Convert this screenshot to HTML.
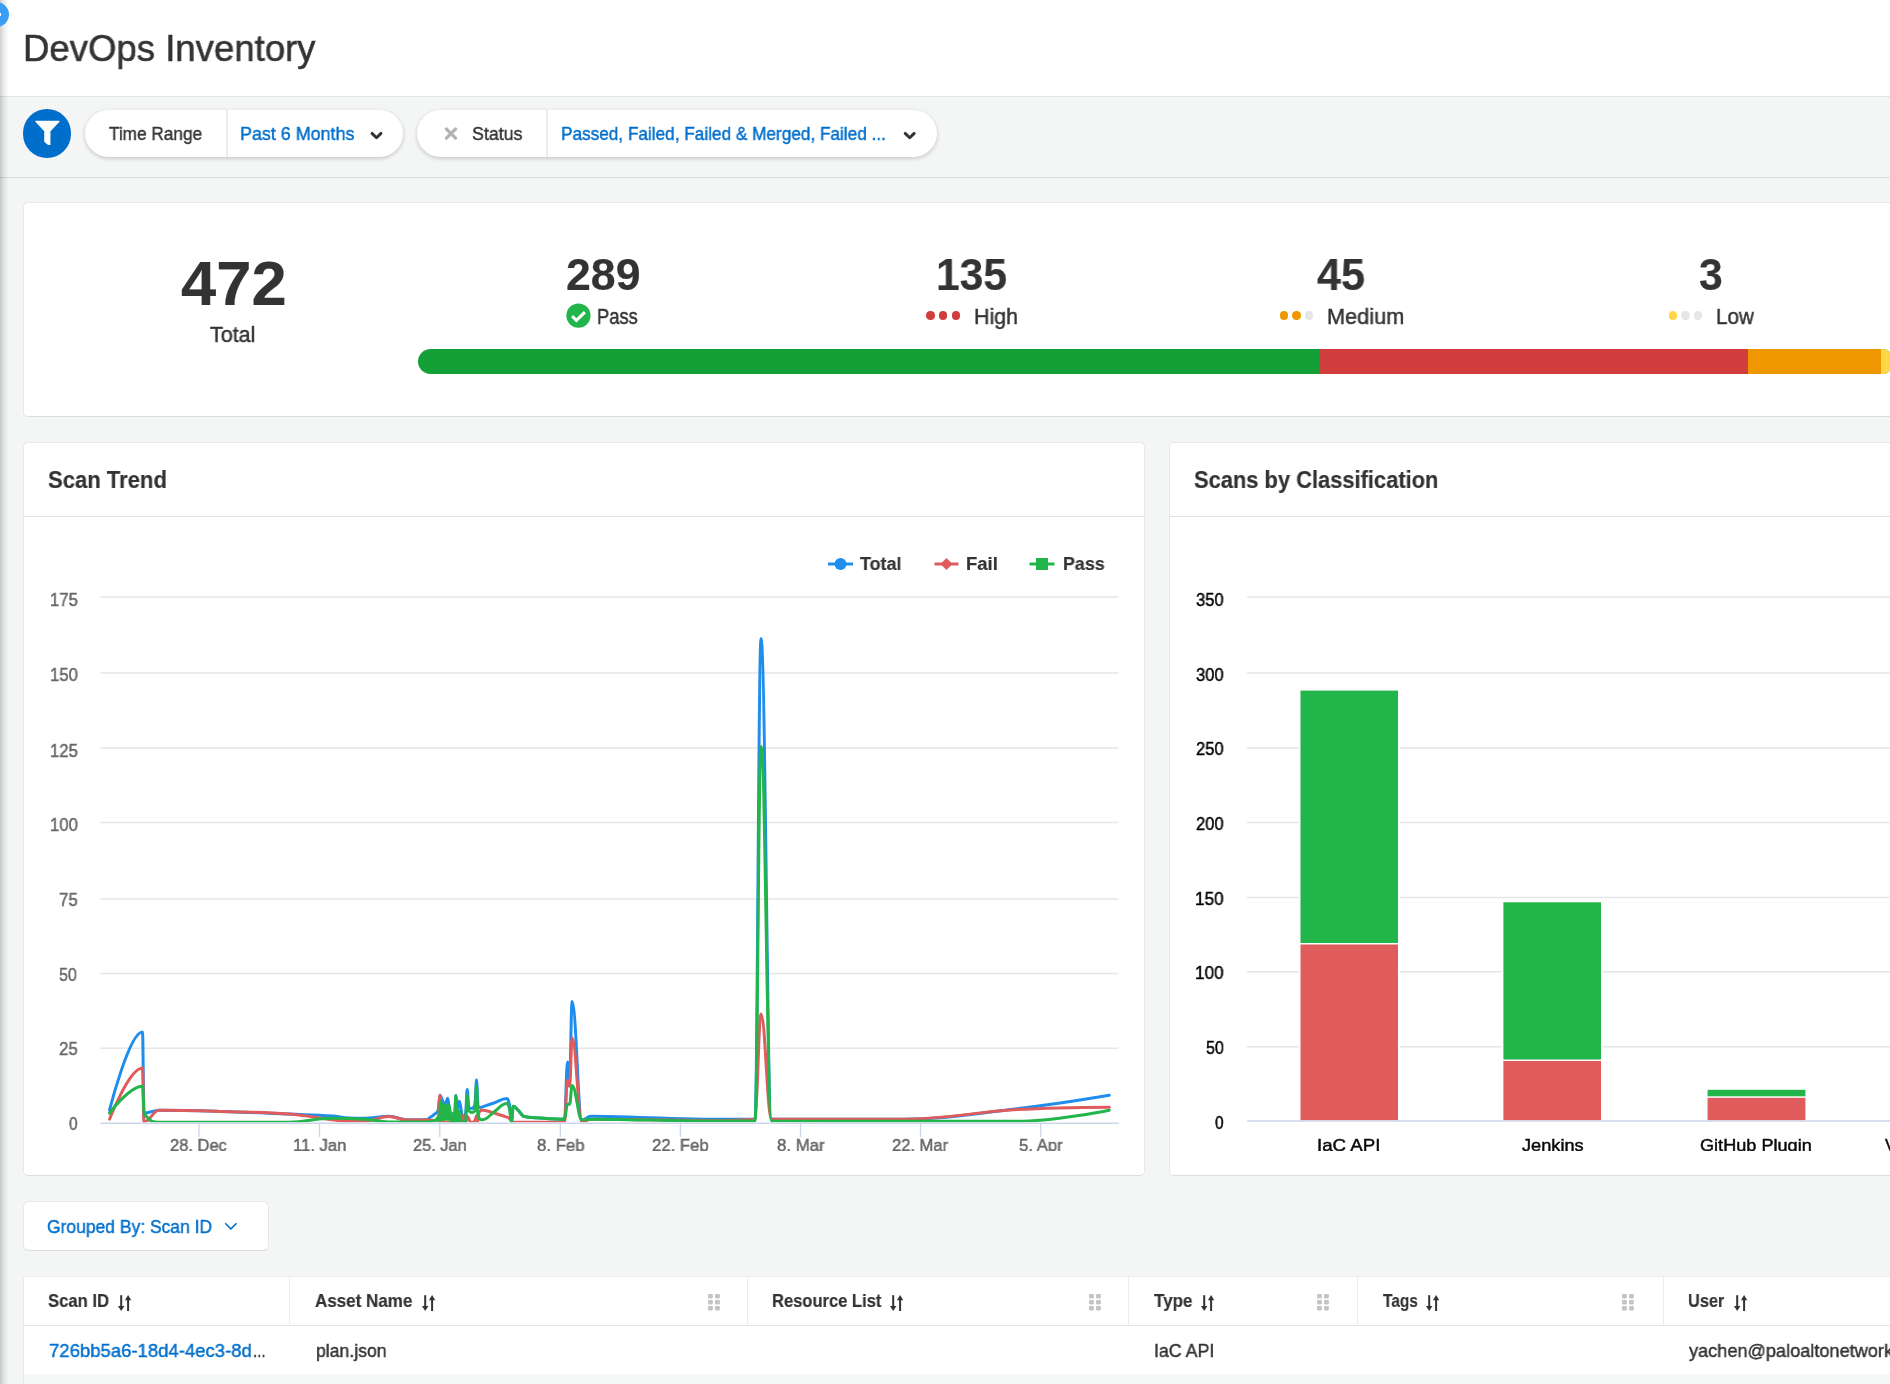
<!DOCTYPE html>
<html lang="en"><head><meta charset="utf-8"><title>DevOps Inventory</title>
<style>
html,body{margin:0;padding:0;width:1890px;height:1384px;overflow:hidden}
#app{position:absolute;left:0;top:0;width:1890px;height:1384px;overflow:hidden;background:#f4f5f5}
body{width:1890px;height:1384px;overflow:hidden;position:relative;background:#f4f5f5;font-family:"Liberation Sans",sans-serif;color:#333}
.abs{position:absolute}
.t{position:absolute;white-space:nowrap;line-height:1;transform-origin:0 0;-webkit-text-stroke:0.45px;will-change:transform}
.card{position:absolute;background:#fff;border:1px solid #e7e8e8;border-bottom-color:#dcdddd;border-radius:5px;box-sizing:border-box}
.pill{position:absolute;top:110px;height:47px;border-radius:24px;background:#fff;box-shadow:0 1.5px 4px rgba(0,0,0,.2)}
.vline{position:absolute;width:1px;background:#e4e5e5}
.pdiv{position:absolute;top:110px;height:47px;width:1.6px;background:#ececec}
.hline{position:absolute;height:1px;background:#e7e8e8}
</style></head><body>
<div id="app">

<div class="abs" style="left:0;top:0;width:1890px;height:96px;background:#fff"></div>
<div class="hline" style="left:0;top:95.5px;height:1.7px;width:1890px;background:#e3e4e4"></div>
<div class="hline" style="left:0;top:177px;width:1890px;background:#dcdddd"></div>
<span class="t" style="left:23.01px;top:30.80px;font-size:36.8px;color:#333;transform:scaleX(0.9932);-webkit-text-stroke:0.55px;">DevOps Inventory</span>
<div class="abs" style="left:22.6px;top:108.9px;width:48.9px;height:48.9px;border-radius:50%;background:#006fcc"></div>
<svg class="abs" style="left:23px;top:109px" width="49" height="49" viewBox="23 109 49 49"><path d="M35.9 121.3H59L49.8 131.1V144.4H48.5L44.9 141.5V131.1Z" fill="#fff" stroke="#fff" stroke-width="1.3" stroke-linejoin="round"/></svg>
<div class="pill" style="left:85px;width:318px"></div>
<div class="pdiv" style="left:226.3px"></div>
<span class="t" style="left:109.00px;top:124.30px;font-size:19px;color:#333;transform:scaleX(0.9058);">Time Range</span>
<span class="t" style="left:240.36px;top:124.30px;font-size:19px;color:#006fcc;transform:scaleX(0.9417);">Past 6 Months</span>
<svg class="abs" style="left:366px;top:127px" width="20" height="16" viewBox="366 127 20 16"><path d="M372 133.4l4.5 4.4l4.5 -4.4" fill="none" stroke="#333" stroke-width="2.9" stroke-linecap="round" stroke-linejoin="round"/></svg>
<div class="pill" style="left:417.3px;width:520px"></div>
<div class="pdiv" style="left:546.3px"></div>
<svg class="abs" style="left:440px;top:124px" width="22" height="20" viewBox="440 124 22 20"><path d="M446.4 129l9.2 9.2M455.6 129l-9.2 9.2" fill="none" stroke="#b3b3b3" stroke-width="3.2" stroke-linecap="round"/></svg>
<span class="t" style="left:471.86px;top:124.30px;font-size:19px;color:#333;transform:scaleX(0.9377);">Status</span>
<span class="t" style="left:560.60px;top:124.30px;font-size:19px;color:#006fcc;transform:scaleX(0.9048);">Passed, Failed, Failed &amp; Merged, Failed ...</span>
<svg class="abs" style="left:900px;top:127px" width="20" height="16" viewBox="900 127 20 16"><path d="M905.2 133.4l4.5 4.4l4.5 -4.4" fill="none" stroke="#333" stroke-width="2.9" stroke-linecap="round" stroke-linejoin="round"/></svg>
<div class="card" style="left:23px;top:202px;width:1900px;height:214.5px"></div>
<span class="t" style="left:180.50px;top:252.00px;font-size:63px;color:#333;font-weight:700;-webkit-text-stroke:0.2px;transform:scaleX(1.0049);">472</span>
<span class="t" style="left:210.00px;top:324.00px;font-size:22px;color:#333;transform:scaleX(0.9783);">Total</span>
<span class="t" style="left:565.80px;top:253.30px;font-size:44.5px;color:#333;font-weight:700;-webkit-text-stroke:0.2px;transform:scaleX(1.0028);">289</span>
<svg class="abs" style="left:565px;top:303px" width="26" height="26" viewBox="565 303 26 26"><circle cx="578.45" cy="315.65" r="12.1" fill="#21b54a"/><path d="M572.1 316.1L576.4 320.4L584.9 312.2" fill="none" stroke="#fff" stroke-width="3"/></svg>
<span class="t" style="left:597.47px;top:306.00px;font-size:22px;color:#333;transform:scaleX(0.8313);">Pass</span>
<span class="t" style="left:936.29px;top:253.30px;font-size:44.5px;color:#333;font-weight:700;-webkit-text-stroke:0.2px;transform:scaleX(0.9556);">135</span>
<div class="abs" style="left:926.4px;top:311.2px;width:8.4px;height:8.4px;border-radius:50%;background:#d13c3c"></div>
<div class="abs" style="left:939.0px;top:311.2px;width:8.4px;height:8.4px;border-radius:50%;background:#d13c3c"></div>
<div class="abs" style="left:951.7px;top:311.2px;width:8.4px;height:8.4px;border-radius:50%;background:#d13c3c"></div>
<span class="t" style="left:974.23px;top:306.00px;font-size:22px;color:#333;transform:scaleX(0.9727);">High</span>
<span class="t" style="left:1317.00px;top:253.30px;font-size:44.5px;color:#333;font-weight:700;-webkit-text-stroke:0.2px;transform:scaleX(0.9694);">45</span>
<div class="abs" style="left:1279.5px;top:311.2px;width:8.4px;height:8.4px;border-radius:50%;background:#ef9700"></div>
<div class="abs" style="left:1292.2px;top:311.2px;width:8.4px;height:8.4px;border-radius:50%;background:#ef9700"></div>
<div class="abs" style="left:1304.8px;top:311.2px;width:8.4px;height:8.4px;border-radius:50%;background:#e6e6e6"></div>
<span class="t" style="left:1327.01px;top:306.00px;font-size:22px;color:#333;transform:scaleX(0.9870);">Medium</span>
<span class="t" style="left:1699.04px;top:253.30px;font-size:44.5px;color:#333;font-weight:700;-webkit-text-stroke:0.2px;transform:scaleX(0.9565);">3</span>
<div class="abs" style="left:1668.8px;top:311.2px;width:8.4px;height:8.4px;border-radius:50%;background:#ffd745"></div>
<div class="abs" style="left:1681.4px;top:311.2px;width:8.4px;height:8.4px;border-radius:50%;background:#e6e6e6"></div>
<div class="abs" style="left:1694.0px;top:311.2px;width:8.4px;height:8.4px;border-radius:50%;background:#e6e6e6"></div>
<span class="t" style="left:1716.06px;top:306.00px;font-size:22px;color:#333;transform:scaleX(0.9375);">Low</span>
<div class="abs" style="left:418px;top:349px;width:1476px;height:25px;border-radius:12.5px;overflow:hidden;background:#12a037"><div class="abs" style="left:901px;top:0;width:429px;height:25px;background:#d13c3c"></div><div class="abs" style="left:1330px;top:0;width:133px;height:25px;background:#ef9700"></div><div class="abs" style="left:1463px;top:0;width:40px;height:25px;background:#ffd745"></div></div>
<div class="card" style="left:23px;top:442px;width:1122px;height:733.5px"></div>
<div class="hline" style="left:24px;top:516px;width:1120px;background:#e1e2e2"></div>
<span class="t" style="left:48.40px;top:468.00px;font-size:24.3px;color:#333;font-weight:700;-webkit-text-stroke:0.2px;transform:scaleX(0.9077);">Scan Trend</span>
<div class="card" style="left:1169px;top:442px;width:760px;height:733.5px"></div>
<div class="hline" style="left:1170px;top:516px;width:760px;background:#e1e2e2"></div>
<span class="t" style="left:1194.40px;top:468.00px;font-size:24.3px;color:#333;font-weight:700;-webkit-text-stroke:0.2px;transform:scaleX(0.9004);">Scans by Classification</span>
<div class="abs" style="left:0;top:0;width:1890px;height:1151px;overflow:hidden">
<svg class="abs" style="left:0;top:0" width="1890" height="1384" viewBox="0 0 1890 1384"><defs><clipPath id="lc"><rect x="100" y="590" width="1019" height="532.3"/></clipPath></defs>
<path d="M100.5 596.9H1118.5" stroke="#e6e6e6" stroke-width="1.5"/>
<path d="M100.5 672.9H1118.5" stroke="#e6e6e6" stroke-width="1.5"/>
<path d="M100.5 747.9H1118.5" stroke="#e6e6e6" stroke-width="1.5"/>
<path d="M100.5 822.6H1118.5" stroke="#e6e6e6" stroke-width="1.5"/>
<path d="M100.5 898.9H1118.5" stroke="#e6e6e6" stroke-width="1.5"/>
<path d="M100.5 973.5H1118.5" stroke="#e6e6e6" stroke-width="1.5"/>
<path d="M100.5 1048.3H1118.5" stroke="#e6e6e6" stroke-width="1.5"/>
<g clip-path="url(#lc)" fill="none" stroke-width="3" stroke-linejoin="round" stroke-linecap="round">
<path d="M109.50 1110.18C109.50 1110.18 129.30 1032.05 142.50 1032.05C143.10 1032.05 143.40 1113.18 144.00 1113.18C150.00 1113.18 153.00 1110.18 159.00 1110.18C187.40 1110.18 201.60 1110.83 230.00 1111.68C253.60 1112.39 265.40 1113.11 289.00 1114.09C306.20 1114.80 314.80 1114.77 332.00 1115.89C338.80 1116.33 342.20 1117.69 349.00 1117.99C355.40 1118.29 358.60 1118.29 365.00 1118.29C374.60 1118.29 379.40 1116.19 389.00 1116.19C396.20 1116.19 399.80 1119.80 407.00 1119.80C415.00 1119.80 419.00 1119.80 427.00 1119.80C428.20 1119.80 428.80 1118.44 430.00 1117.54C431.60 1116.34 432.40 1116.04 434.00 1114.54C435.72 1112.92 436.58 1114.54 438.30 1109.73C438.98 1104.92 439.32 1095.31 440.00 1095.31C441.16 1095.31 441.74 1099.74 442.90 1101.62C443.90 1103.23 444.40 1104.02 445.40 1104.02C446.32 1104.02 446.78 1098.31 447.70 1098.31C448.54 1098.31 448.96 1109.13 449.80 1111.53C450.68 1113.94 451.12 1113.34 452.00 1113.94C453.04 1114.54 453.56 1114.54 454.60 1114.54C455.12 1114.54 455.38 1095.61 455.90 1095.61C456.50 1095.61 456.80 1108.53 457.40 1108.53C458.16 1108.53 458.54 1101.32 459.30 1101.32C460.22 1101.32 460.68 1108.41 461.60 1112.73C462.24 1115.74 462.56 1119.65 463.20 1119.65C463.76 1119.65 464.04 1118.49 464.60 1116.94C465.04 1115.72 465.26 1116.94 465.70 1112.73C466.30 1108.53 466.60 1089.60 467.20 1089.60C467.84 1089.60 468.16 1105.52 468.80 1106.72C469.20 1107.93 469.40 1107.70 469.80 1107.93C470.68 1108.42 471.12 1108.53 472.00 1108.53C472.76 1108.53 473.14 1108.20 473.90 1106.72C474.38 1105.79 474.62 1106.72 475.10 1102.52C475.66 1098.31 475.94 1079.98 476.50 1079.98C477.10 1079.98 477.40 1103.42 478.00 1105.52C478.80 1107.63 479.20 1107.63 480.00 1107.63C480.56 1107.63 480.84 1107.36 481.40 1107.17C486.44 1105.50 488.96 1104.70 494.00 1102.97C499.12 1101.21 501.68 1098.46 506.80 1098.46C507.88 1098.46 508.42 1099.93 509.50 1105.07C510.34 1109.07 510.76 1121.30 511.60 1121.30C512.24 1121.30 512.56 1106.27 513.20 1106.27C515.12 1106.27 516.08 1108.28 518.00 1110.18C520.08 1112.24 521.12 1114.39 523.20 1116.19C529.92 1117.99 533.28 1117.50 540.00 1117.99C549.80 1118.71 554.70 1119.19 564.50 1119.19C565.70 1119.19 566.30 1062.10 567.50 1062.10C568.34 1062.10 568.76 1078.63 569.60 1078.63C570.60 1078.63 571.10 1001.40 572.10 1001.40C576.06 1001.40 578.04 1120.10 582.00 1120.10C585.52 1120.10 587.28 1116.19 590.80 1116.19C614.48 1116.19 626.32 1117.10 650.00 1117.69C674.40 1118.30 686.60 1119.19 711.00 1119.19C728.60 1119.19 737.40 1119.19 755.00 1119.19C757.40 1119.19 758.60 638.39 761.00 638.39C765.20 638.39 767.30 1119.19 771.50 1119.19C824.10 1119.19 850.40 1119.19 903.00 1119.19C948.60 1119.19 971.40 1113.99 1017.00 1108.68C1053.92 1104.38 1109.30 1095.15 1109.30 1095.15" stroke="#1f8deb"/>
<path d="M109.50 1119.19C109.50 1119.19 129.30 1068.11 142.50 1068.11C143.10 1068.11 143.40 1122.20 144.00 1122.20C150.00 1122.20 153.00 1110.18 159.00 1110.18C187.40 1110.18 201.60 1110.83 230.00 1111.68C253.60 1112.39 265.40 1112.21 289.00 1114.09C306.20 1115.45 314.80 1117.64 332.00 1119.80C338.80 1120.65 342.20 1121.60 349.00 1121.60C355.40 1121.60 358.60 1121.60 365.00 1121.30C374.60 1121.00 379.40 1116.49 389.00 1116.49C396.20 1116.49 399.80 1120.10 407.00 1120.10C415.00 1120.10 419.00 1120.10 427.00 1120.10C430.60 1120.10 432.40 1120.55 436.00 1120.55C436.92 1120.55 437.38 1120.55 438.30 1117.54C438.98 1114.54 439.32 1095.31 440.00 1095.31C440.68 1095.31 441.02 1122.20 441.70 1122.20C443.02 1122.20 443.68 1121.75 445.00 1121.75C445.52 1121.75 445.78 1122.20 446.30 1122.20C447.38 1122.20 447.92 1122.20 449.00 1122.20C450.00 1122.20 450.50 1121.15 451.50 1121.15C452.90 1121.15 453.60 1122.20 455.00 1122.20C456.20 1122.20 456.80 1119.95 458.00 1119.95C459.40 1119.95 460.10 1120.55 461.50 1120.55C462.10 1120.55 462.40 1115.14 463.00 1115.14C463.60 1115.14 463.90 1116.33 464.50 1117.84C465.02 1119.15 465.28 1122.20 465.80 1122.20C466.44 1122.20 466.76 1116.64 467.40 1116.64C468.76 1116.64 469.44 1122.20 470.80 1122.20C472.00 1122.20 472.60 1122.20 473.80 1122.20C475.08 1122.20 475.72 1115.44 477.00 1115.44C477.28 1115.44 477.42 1122.20 477.70 1122.20C478.22 1122.20 478.48 1113.34 479.00 1112.13C479.60 1110.93 479.90 1111.49 480.50 1110.93C480.86 1110.59 481.04 1109.88 481.40 1109.88C486.44 1109.88 488.96 1111.75 494.00 1113.18C499.12 1114.64 501.68 1115.30 506.80 1117.09C507.88 1117.47 508.42 1117.65 509.50 1118.59C510.34 1119.33 510.76 1120.48 511.60 1121.30C512.24 1121.92 512.56 1122.20 513.20 1122.20C515.12 1122.20 516.08 1122.20 518.00 1122.20C520.08 1122.20 521.12 1122.20 523.20 1122.20C529.92 1122.20 533.28 1122.20 540.00 1122.20C549.80 1122.20 554.70 1122.20 564.50 1122.20C565.70 1122.20 566.30 1080.13 567.50 1080.13C568.34 1080.13 568.76 1086.14 569.60 1086.14C570.60 1086.14 571.10 1038.06 572.10 1038.06C576.06 1038.06 578.04 1122.20 582.00 1122.20C585.52 1122.20 587.28 1119.19 590.80 1119.19C614.48 1119.19 626.32 1119.56 650.00 1119.80C674.40 1120.04 686.60 1120.40 711.00 1120.40C728.60 1120.40 737.40 1120.40 755.00 1119.19C757.40 1117.99 758.60 1014.02 761.00 1014.02C765.20 1014.02 767.30 1119.19 771.50 1119.19C824.10 1119.19 850.40 1119.19 903.00 1119.19C948.60 1119.19 971.40 1112.24 1017.00 1109.58C1053.92 1107.43 1109.30 1107.17 1109.30 1107.17" stroke="#df5b5c"/>
<path d="M109.50 1113.18C109.50 1113.18 129.30 1086.14 142.50 1086.14C143.10 1086.14 143.40 1104.17 144.00 1113.18C150.00 1122.20 153.00 1122.20 159.00 1122.20C187.40 1122.20 201.60 1122.20 230.00 1122.20C253.60 1122.20 265.40 1122.20 289.00 1122.20C306.20 1122.20 314.80 1118.29 332.00 1118.29C338.80 1118.29 342.20 1118.41 349.00 1118.59C355.40 1118.77 358.60 1118.67 365.00 1119.19C374.60 1119.99 379.40 1121.90 389.00 1121.90C396.20 1121.90 399.80 1121.90 407.00 1121.90C415.00 1121.90 419.00 1121.90 427.00 1121.90C430.60 1121.90 432.40 1121.43 436.00 1119.95C436.92 1119.57 437.38 1117.24 438.30 1117.24C438.74 1117.24 438.96 1122.20 439.40 1122.20C439.80 1122.20 440.00 1101.62 440.40 1101.62C440.65 1101.62 440.77 1120.32 441.02 1120.32C441.27 1120.32 441.39 1103.39 441.64 1103.39C441.89 1103.39 442.01 1119.35 442.26 1119.35C442.51 1119.35 442.63 1104.73 442.88 1104.73C443.13 1104.73 443.25 1119.35 443.50 1119.35C443.75 1119.35 443.87 1105.11 444.12 1105.11C444.37 1105.11 444.49 1119.35 444.74 1119.35C444.99 1119.35 445.11 1106.08 445.36 1106.08C445.61 1106.08 445.73 1119.35 445.98 1119.35C446.23 1119.35 446.35 1106.00 446.60 1106.00C446.85 1106.00 446.97 1119.35 447.22 1119.35C447.47 1119.35 447.59 1104.51 447.84 1104.51C448.09 1104.51 448.21 1119.35 448.46 1119.35C448.71 1119.35 448.83 1105.71 449.08 1105.71C449.57 1105.71 449.81 1108.96 450.30 1113.34C450.55 1115.56 450.67 1122.20 450.92 1122.20C451.17 1122.20 451.29 1113.55 451.54 1113.55C451.79 1113.55 451.91 1122.20 452.16 1122.20C452.41 1122.20 452.53 1113.76 452.78 1113.76C453.03 1113.76 453.15 1122.20 453.40 1122.20C453.88 1122.20 454.12 1122.20 454.60 1120.55C455.12 1118.89 455.38 1095.61 455.90 1095.61C456.46 1095.61 456.74 1122.20 457.30 1122.20C457.55 1122.20 457.67 1110.42 457.92 1110.42C458.17 1110.42 458.29 1122.20 458.54 1122.20C458.79 1122.20 458.91 1110.61 459.16 1110.61C459.41 1110.61 459.53 1122.20 459.78 1122.20C460.03 1122.20 460.15 1112.50 460.40 1112.50C460.65 1112.50 460.77 1122.20 461.02 1122.20C461.89 1122.20 462.33 1122.20 463.20 1122.20C463.76 1122.20 464.04 1122.20 464.60 1122.20C465.04 1122.20 465.26 1122.20 465.70 1119.95C466.30 1117.69 466.60 1095.31 467.20 1095.31C467.84 1095.31 468.16 1109.73 468.80 1110.63C469.20 1111.53 469.40 1111.27 469.80 1111.53C470.48 1111.99 470.82 1112.43 471.50 1112.43C472.46 1112.43 472.94 1112.39 473.90 1111.83C474.38 1111.55 474.62 1111.83 475.10 1110.33C475.66 1108.83 475.94 1086.29 476.50 1086.29C477.10 1086.29 477.40 1112.73 478.00 1115.74C478.64 1118.74 478.96 1117.98 479.60 1118.74C480.32 1119.60 480.68 1119.80 481.40 1119.80C482.24 1119.80 482.66 1119.80 483.50 1119.50C487.70 1119.19 489.80 1114.85 494.00 1111.98C499.12 1108.48 501.68 1103.57 506.80 1103.57C507.88 1103.57 508.42 1104.49 509.50 1108.68C510.34 1111.94 510.76 1122.20 511.60 1122.20C512.24 1122.20 512.56 1106.27 513.20 1106.27C515.12 1106.27 516.08 1108.28 518.00 1110.18C520.08 1112.24 521.12 1114.39 523.20 1116.19C529.92 1117.99 533.28 1117.50 540.00 1117.99C549.80 1118.71 554.70 1119.19 564.50 1119.19C565.70 1119.19 566.30 1104.17 567.50 1104.17C568.34 1104.17 568.76 1104.17 569.60 1104.17C570.60 1104.17 571.10 1085.54 572.10 1085.54C576.06 1085.54 578.04 1120.10 582.00 1120.10C585.52 1120.10 587.28 1119.19 590.80 1119.19C614.48 1119.19 626.32 1119.74 650.00 1120.10C674.40 1120.46 686.60 1121.00 711.00 1121.00C728.60 1121.00 737.40 1121.00 755.00 1121.00C757.40 1121.00 758.60 746.58 761.00 746.58C765.20 746.58 767.30 1120.70 771.50 1121.00C824.10 1121.30 850.40 1121.30 903.00 1121.30C948.60 1121.30 971.40 1121.30 1017.00 1121.30C1053.92 1121.30 1109.30 1110.18 1109.30 1110.18" stroke="#21b54a"/>
</g>
<path d="M100.5 1123.2H1118.8" stroke="#ccd6eb" stroke-width="1.5"/>
<path d="M199.0 1123.2V1137" stroke="#ccd6eb" stroke-width="1.3"/>
<path d="M319.5 1123.2V1137" stroke="#ccd6eb" stroke-width="1.3"/>
<path d="M439.8 1123.2V1137" stroke="#ccd6eb" stroke-width="1.3"/>
<path d="M560.3 1123.2V1137" stroke="#ccd6eb" stroke-width="1.3"/>
<path d="M680.4 1123.2V1137" stroke="#ccd6eb" stroke-width="1.3"/>
<path d="M800.5 1123.2V1137" stroke="#ccd6eb" stroke-width="1.3"/>
<path d="M920.5 1123.2V1137" stroke="#ccd6eb" stroke-width="1.3"/>
<path d="M1040.7 1123.2V1137" stroke="#ccd6eb" stroke-width="1.3"/>
<path d="M828 564H853" stroke="#1f8deb" stroke-width="3"/><circle cx="840.5" cy="564" r="6" fill="#1f8deb"/>
<path d="M934.5 564H958.5" stroke="#df5b5c" stroke-width="3"/><path d="M946.5 558l6 6l-6 6l-6 -6z" fill="#df5b5c"/>
<path d="M1029.5 564H1054.5" stroke="#21b54a" stroke-width="3"/><rect x="1036" y="558" width="12" height="12" fill="#21b54a"/>
<path d="M1247 596.9H1900" stroke="#e6e6e6" stroke-width="1.5"/>
<path d="M1247 673.0H1900" stroke="#e6e6e6" stroke-width="1.5"/>
<path d="M1247 747.9H1900" stroke="#e6e6e6" stroke-width="1.5"/>
<path d="M1247 822.6H1900" stroke="#e6e6e6" stroke-width="1.5"/>
<path d="M1247 897.4H1900" stroke="#e6e6e6" stroke-width="1.5"/>
<path d="M1247 971.8H1900" stroke="#e6e6e6" stroke-width="1.5"/>
<path d="M1247 1046.7H1900" stroke="#e6e6e6" stroke-width="1.5"/>
<rect x="1298.7" y="689.0" width="101.1" height="431.3" fill="#fff"/>
<rect x="1300.5" y="690.6" width="97.5" height="252.4" fill="#21b54a"/>
<rect x="1300.5" y="944.5" width="97.5" height="175.8" fill="#df5b5c"/>
<rect x="1501.6" y="900.7" width="101.2" height="219.6" fill="#fff"/>
<rect x="1503.4" y="902.3" width="97.6" height="157.2" fill="#21b54a"/>
<rect x="1503.4" y="1061.0" width="97.6" height="59.3" fill="#df5b5c"/>
<rect x="1705.8" y="1088.2" width="101.4" height="32.1" fill="#fff"/>
<rect x="1707.6" y="1089.8" width="97.8" height="6.5" fill="#21b54a"/>
<rect x="1707.6" y="1097.8" width="97.8" height="22.5" fill="#df5b5c"/>
<path d="M1247 1121.1H1900" stroke="#ccd6eb" stroke-width="1.5"/>
</svg>
<span class="t" style="left:49.65px;top:591.90px;font-size:17.5px;color:#666;transform:scaleX(0.9536);">175</span>
<span class="t" style="left:49.65px;top:666.60px;font-size:17.5px;color:#666;transform:scaleX(0.9536);">150</span>
<span class="t" style="left:49.65px;top:743.00px;font-size:17.5px;color:#666;transform:scaleX(0.9536);">125</span>
<span class="t" style="left:49.65px;top:817.40px;font-size:17.5px;color:#666;transform:scaleX(0.9536);">100</span>
<span class="t" style="left:59.00px;top:892.20px;font-size:17.5px;color:#666;transform:scaleX(0.9632);">75</span>
<span class="t" style="left:59.00px;top:967.00px;font-size:17.5px;color:#666;transform:scaleX(0.9150);">50</span>
<span class="t" style="left:59.00px;top:1041.30px;font-size:17.5px;color:#666;transform:scaleX(0.9632);">25</span>
<span class="t" style="left:68.50px;top:1116.20px;font-size:17.5px;color:#666;transform:scaleX(0.8800);">0</span>
<span class="t" style="left:170.40px;top:1136.90px;font-size:17px;color:#666;transform:scaleX(0.9695);">28. Dec</span>
<span class="t" style="left:292.52px;top:1136.90px;font-size:17px;color:#666;transform:scaleX(0.9811);">11. Jan</span>
<span class="t" style="left:412.80px;top:1136.90px;font-size:17px;color:#666;transform:scaleX(0.9643);">25. Jan</span>
<span class="t" style="left:536.60px;top:1136.90px;font-size:17px;color:#666;transform:scaleX(0.9875);">8. Feb</span>
<span class="t" style="left:651.90px;top:1136.90px;font-size:17px;color:#666;transform:scaleX(0.9828);">22. Feb</span>
<span class="t" style="left:776.75px;top:1136.90px;font-size:17px;color:#666;transform:scaleX(0.9896);">8. Mar</span>
<span class="t" style="left:892.30px;top:1136.90px;font-size:17px;color:#666;transform:scaleX(0.9724);">22. Mar</span>
<span class="t" style="left:1018.55px;top:1136.90px;font-size:17px;color:#666;transform:scaleX(0.9844);">5. Apr</span>
<span class="t" style="left:860.40px;top:555.00px;font-size:18.5px;color:#333;font-weight:700;-webkit-text-stroke:0.2px;transform:scaleX(0.9651);">Total</span>
<span class="t" style="left:965.70px;top:555.00px;font-size:18.5px;color:#333;font-weight:700;-webkit-text-stroke:0.2px;transform:scaleX(0.9906);">Fail</span>
<span class="t" style="left:1063.00px;top:555.00px;font-size:18.5px;color:#333;font-weight:700;-webkit-text-stroke:0.2px;transform:scaleX(0.9628);">Pass</span>
<span class="t" style="left:1196.40px;top:592.10px;font-size:17.5px;color:#000;transform:scaleX(0.9448);">350</span>
<span class="t" style="left:1196.40px;top:666.80px;font-size:17.5px;color:#000;transform:scaleX(0.9448);">300</span>
<span class="t" style="left:1196.40px;top:741.30px;font-size:17.5px;color:#000;transform:scaleX(0.9448);">250</span>
<span class="t" style="left:1196.40px;top:816.00px;font-size:17.5px;color:#000;transform:scaleX(0.9448);">200</span>
<span class="t" style="left:1195.42px;top:890.70px;font-size:17.5px;color:#000;transform:scaleX(0.9786);">150</span>
<span class="t" style="left:1195.42px;top:965.40px;font-size:17.5px;color:#000;transform:scaleX(0.9786);">100</span>
<span class="t" style="left:1205.50px;top:1040.00px;font-size:17.5px;color:#000;transform:scaleX(0.9150);">50</span>
<span class="t" style="left:1215.00px;top:1114.70px;font-size:17.5px;color:#000;transform:scaleX(0.8800);">0</span>
<span class="t" style="left:1317.20px;top:1136.90px;font-size:17px;color:#0a0a0a;transform:scaleX(1.1018);">IaC API</span>
<span class="t" style="left:1521.50px;top:1136.90px;font-size:17px;color:#0a0a0a;transform:scaleX(1.0690);">Jenkins</span>
<span class="t" style="left:1700.30px;top:1136.90px;font-size:17px;color:#0a0a0a;transform:scaleX(1.0657);">GitHub Plugin</span>
<span class="t" style="left:1884.60px;top:1136.90px;font-size:17px;color:#0a0a0a;">Visual Studio Code</span>
</div>
<div class="card" style="left:23px;top:1201px;width:245.5px;height:49.5px;border-radius:6px"></div>
<span class="t" style="left:47.40px;top:1217.30px;font-size:19px;color:#006fcc;transform:scaleX(0.9196);">Grouped By: Scan ID</span>
<svg class="abs" style="left:222px;top:1218px" width="20" height="16" viewBox="222 1218 20 16"><path d="M225.2 1223.2l5.7 5.7l5.7 -5.7" fill="none" stroke="#006fcc" stroke-width="1.5"/></svg>
<div class="abs" style="left:23px;top:1275.5px;width:1900px;height:120px;background:#f6f7f7;border:1px solid #e9eaea;border-top-color:#eef0f0;box-sizing:border-box"></div>
<div class="abs" style="left:24px;top:1276.5px;width:1900px;height:97.3px;background:#fff"></div>
<div class="hline" style="left:24px;top:1325px;width:1900px;background:#e4e5e5"></div>
<div class="vline" style="left:289.0px;top:1277px;height:48px;background:#eceded"></div>
<div class="vline" style="left:747.0px;top:1277px;height:48px;background:#eceded"></div>
<div class="vline" style="left:1128.0px;top:1277px;height:48px;background:#eceded"></div>
<div class="vline" style="left:1357.0px;top:1277px;height:48px;background:#eceded"></div>
<div class="vline" style="left:1663.0px;top:1277px;height:48px;background:#eceded"></div>
<span class="t" style="left:48.00px;top:1291.00px;font-size:19px;color:#333;font-weight:700;-webkit-text-stroke:0.2px;transform:scaleX(0.8757);">Scan ID</span>
<svg class="abs" style="left:118.0px;top:1293.5px" width="15" height="18" viewBox="0 0 15 18"><g fill="#333" stroke="none"><rect x="2.2" y="1.2" width="2" height="11.6"/><path d="M0 11.9H6.4L3.2 17Z"/><rect x="9.1" y="5.4" width="2" height="11.6"/><path d="M6.9 6.2H13.3L10.1 1.1Z"/></g></svg>
<span class="t" style="left:315.00px;top:1291.00px;font-size:19px;color:#333;font-weight:700;-webkit-text-stroke:0.2px;transform:scaleX(0.8945);">Asset Name</span>
<svg class="abs" style="left:422.0px;top:1293.5px" width="15" height="18" viewBox="0 0 15 18"><g fill="#333" stroke="none"><rect x="2.2" y="1.2" width="2" height="11.6"/><path d="M0 11.9H6.4L3.2 17Z"/><rect x="9.1" y="5.4" width="2" height="11.6"/><path d="M6.9 6.2H13.3L10.1 1.1Z"/></g></svg>
<span class="t" style="left:771.80px;top:1291.00px;font-size:19px;color:#333;font-weight:700;-webkit-text-stroke:0.2px;transform:scaleX(0.8706);">Resource List</span>
<svg class="abs" style="left:890.3px;top:1293.5px" width="15" height="18" viewBox="0 0 15 18"><g fill="#333" stroke="none"><rect x="2.2" y="1.2" width="2" height="11.6"/><path d="M0 11.9H6.4L3.2 17Z"/><rect x="9.1" y="5.4" width="2" height="11.6"/><path d="M6.9 6.2H13.3L10.1 1.1Z"/></g></svg>
<span class="t" style="left:1154.00px;top:1291.00px;font-size:19px;color:#333;font-weight:700;-webkit-text-stroke:0.2px;transform:scaleX(0.8953);">Type</span>
<svg class="abs" style="left:1201.0px;top:1293.5px" width="15" height="18" viewBox="0 0 15 18"><g fill="#333" stroke="none"><rect x="2.2" y="1.2" width="2" height="11.6"/><path d="M0 11.9H6.4L3.2 17Z"/><rect x="9.1" y="5.4" width="2" height="11.6"/><path d="M6.9 6.2H13.3L10.1 1.1Z"/></g></svg>
<span class="t" style="left:1382.50px;top:1291.00px;font-size:19px;color:#333;font-weight:700;-webkit-text-stroke:0.2px;transform:scaleX(0.8140);">Tags</span>
<svg class="abs" style="left:1426.0px;top:1293.5px" width="15" height="18" viewBox="0 0 15 18"><g fill="#333" stroke="none"><rect x="2.2" y="1.2" width="2" height="11.6"/><path d="M0 11.9H6.4L3.2 17Z"/><rect x="9.1" y="5.4" width="2" height="11.6"/><path d="M6.9 6.2H13.3L10.1 1.1Z"/></g></svg>
<span class="t" style="left:1688.00px;top:1291.00px;font-size:19px;color:#333;font-weight:700;-webkit-text-stroke:0.2px;transform:scaleX(0.8605);">User</span>
<svg class="abs" style="left:1734.0px;top:1293.5px" width="15" height="18" viewBox="0 0 15 18"><g fill="#333" stroke="none"><rect x="2.2" y="1.2" width="2" height="11.6"/><path d="M0 11.9H6.4L3.2 17Z"/><rect x="9.1" y="5.4" width="2" height="11.6"/><path d="M6.9 6.2H13.3L10.1 1.1Z"/></g></svg>
<svg class="abs" style="left:707.6px;top:1294.2px" width="12" height="17" viewBox="0 0 12 17" fill="#c4c4c4"><rect x="0.0" y="0.0" width="4.9" height="4.4" rx="1.1"/><rect x="0.0" y="6.0" width="4.9" height="4.4" rx="1.1"/><rect x="0.0" y="12.0" width="4.9" height="4.4" rx="1.1"/><rect x="7.0" y="0.0" width="4.9" height="4.4" rx="1.1"/><rect x="7.0" y="6.0" width="4.9" height="4.4" rx="1.1"/><rect x="7.0" y="12.0" width="4.9" height="4.4" rx="1.1"/></svg>
<svg class="abs" style="left:1089.1px;top:1294.2px" width="12" height="17" viewBox="0 0 12 17" fill="#c4c4c4"><rect x="0.0" y="0.0" width="4.9" height="4.4" rx="1.1"/><rect x="0.0" y="6.0" width="4.9" height="4.4" rx="1.1"/><rect x="0.0" y="12.0" width="4.9" height="4.4" rx="1.1"/><rect x="7.0" y="0.0" width="4.9" height="4.4" rx="1.1"/><rect x="7.0" y="6.0" width="4.9" height="4.4" rx="1.1"/><rect x="7.0" y="12.0" width="4.9" height="4.4" rx="1.1"/></svg>
<svg class="abs" style="left:1316.6px;top:1294.2px" width="12" height="17" viewBox="0 0 12 17" fill="#c4c4c4"><rect x="0.0" y="0.0" width="4.9" height="4.4" rx="1.1"/><rect x="0.0" y="6.0" width="4.9" height="4.4" rx="1.1"/><rect x="0.0" y="12.0" width="4.9" height="4.4" rx="1.1"/><rect x="7.0" y="0.0" width="4.9" height="4.4" rx="1.1"/><rect x="7.0" y="6.0" width="4.9" height="4.4" rx="1.1"/><rect x="7.0" y="12.0" width="4.9" height="4.4" rx="1.1"/></svg>
<svg class="abs" style="left:1622.1px;top:1294.2px" width="12" height="17" viewBox="0 0 12 17" fill="#c4c4c4"><rect x="0.0" y="0.0" width="4.9" height="4.4" rx="1.1"/><rect x="0.0" y="6.0" width="4.9" height="4.4" rx="1.1"/><rect x="0.0" y="12.0" width="4.9" height="4.4" rx="1.1"/><rect x="7.0" y="0.0" width="4.9" height="4.4" rx="1.1"/><rect x="7.0" y="6.0" width="4.9" height="4.4" rx="1.1"/><rect x="7.0" y="12.0" width="4.9" height="4.4" rx="1.1"/></svg>
<span class="t" style="left:49.30px;top:1341.00px;font-size:19px;color:#006fcc;transform:scaleX(0.9745);">726bb5a6-18d4-4ec3-8d</span>
<span class="t" style="left:253.40px;top:1341.00px;font-size:19px;color:#333;transform:scaleX(0.8000);">...</span>
<span class="t" style="left:316.00px;top:1341.00px;font-size:19px;color:#333;transform:scaleX(0.9276);">plan.json</span>
<span class="t" style="left:1154.06px;top:1341.00px;font-size:19px;color:#333;transform:scaleX(0.9365);">IaC API</span>
<span class="t" style="left:1688.50px;top:1341.00px;font-size:19px;color:#333;transform:scaleX(0.9549);">yachen@paloaltonetworks.com</span>
<div class="abs" style="left:0;top:0;width:9px;height:1384px;background:linear-gradient(to right,rgba(0,0,0,.19),rgba(0,0,0,.07) 45%,rgba(0,0,0,0))"></div>
<div class="abs" style="left:-15.6px;top:2.3px;width:24.8px;height:24.8px;border-radius:50%;background:#3a9ef5"></div>
<div class="abs" style="left:0;top:13.4px;width:1.1px;height:2.6px;background:#fff"></div>
</div>
</body></html>
